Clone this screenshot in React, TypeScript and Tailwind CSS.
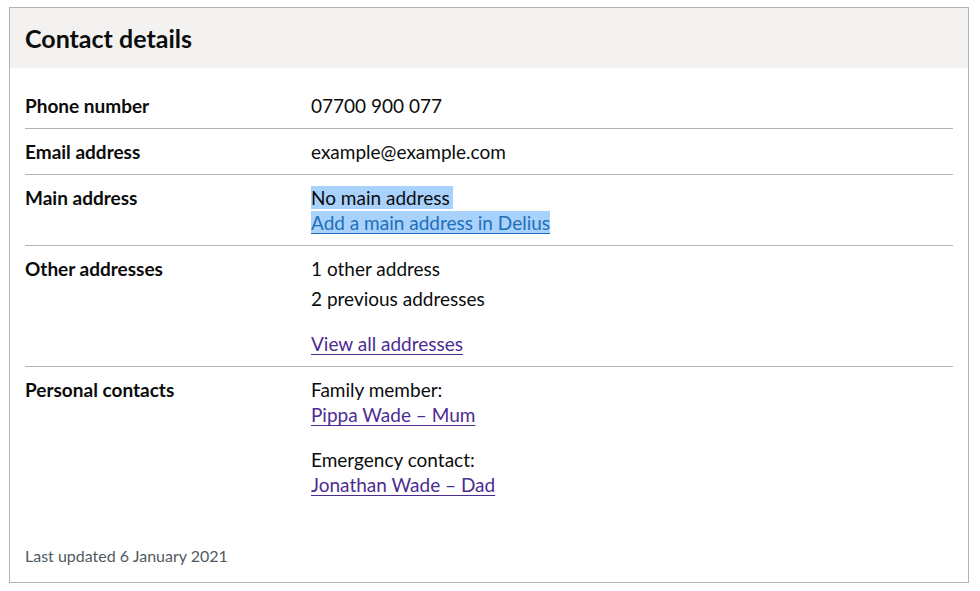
const font = { fontFamily: "Lato, 'Liberation Sans', Arial, sans-serif" };

const keyClass = "py-[10px] pr-5 text-[19px] font-bold leading-[25px] text-[#0b0c0c]";
const valueClass = "py-[10px] text-[19px] leading-[25px] text-[#0b0c0c]";
const visitedLink = "text-[#4c2c92] underline decoration-1 underline-offset-[3px]";

function Row({ label, children, last = false }: { label: string; children: React.ReactNode; last?: boolean }) {
  return (
    <div className={`grid grid-cols-[286px_1fr] ${last ? "" : "border-b border-[#b1b4b6]"}`}>
      <dt className={keyClass}>{label}</dt>
      <dd className={valueClass}>{children}</dd>
    </div>
  );
}

export default function App() {
  return (
    <div className="min-h-screen bg-white pl-[9px] pt-[7px]" style={font}>
      <section className="w-[960px] border border-[#b1b4b6]">
        <header className="bg-[#f3f2f1] px-[15px] pt-[15px] pb-[15px]">
          <h2 className="text-[25px] font-bold leading-[30px] text-[#0b0c0c]">Contact details</h2>
        </header>
        <div className="px-[15px] pt-[15px] pb-[16px]">
          <dl>
            <Row label="Phone number">07700 900 077</Row>
            <Row label="Email address">example@example.com</Row>
            <Row label="Main address">
              <p>
                <span className="bg-[#a8d1fc] pr-[3px]">No main address</span>
              </p>
              <p>
                <a href="#" className="bg-[#a8d1fc] text-[#1d70b8] underline decoration-1 underline-offset-[3px]">
                  Add a main address in Delius
                </a>
              </p>
            </Row>
            <Row label="Other addresses">
              <p className="mb-[5px]">1 other address</p>
              <p className="mb-5">2 previous addresses</p>
              <p>
                <a href="#" className={visitedLink}>View all addresses</a>
              </p>
            </Row>
            <Row label="Personal contacts" last>
              <p>Family member:</p>
              <p className="mb-5">
                <a href="#" className={visitedLink}>Pippa Wade – Mum</a>
              </p>
              <p>Emergency contact:</p>
              <p>
                <a href="#" className={visitedLink}>Jonathan Wade – Dad</a>
              </p>
            </Row>
          </dl>
          <p className="mt-[39px] text-[16px] leading-[20px] text-[#505a5f]">Last updated 6 January 2021</p>
        </div>
      </section>
    </div>
  );
}
